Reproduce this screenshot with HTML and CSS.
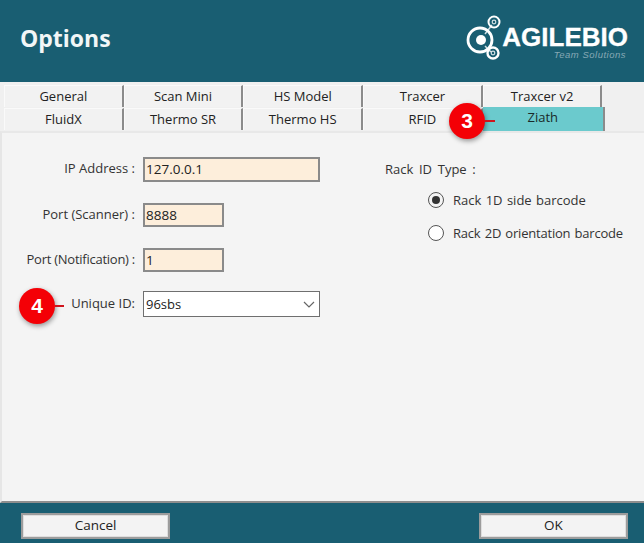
FILE: index.html
```html
<!DOCTYPE html>
<html lang="en">
<head>
<meta charset="utf-8">
<title>Options</title>
<link rel="stylesheet" href="styles.css">
</head>
<body>
<div class="app">
  <header class="header">
    <h1 class="title">Options</h1>
    <div class="logo">
      <svg class="logo-mark" width="36" height="47" viewBox="0 0 36 47" aria-hidden="true">
        <g fill="none" stroke="#fff">
          <path d="M19 19 L26 10 M19 31 L25 37" stroke-width="1.500" opacity=".8"/>
          <circle cx="14" cy="25" r="12" stroke-width="2.800"/>
          <circle cx="28" cy="7" r="5.500" stroke-width="2"/>
          <circle cx="28" cy="7" r="1.800" stroke-width="1.200" opacity=".8"/>
          <circle cx="27" cy="38" r="5.500" stroke-width="2.400"/>
          <circle cx="27" cy="38" r="1.800" stroke-width="1.200" opacity=".8"/>
        </g>
        <circle cx="15" cy="25" r="5" fill="#fff"/>
      </svg>
      <div class="logo-text">
        <div class="logo-name">AGILEBIO</div>
        <div class="logo-sub">Team Solutions</div>
      </div>
    </div>
  </header>

  <main class="body">
    <div class="tabs">
      <div class="tab-row">
        <div class="tab">General</div>
        <div class="tab">Scan Mini</div>
        <div class="tab">HS Model</div>
        <div class="tab">Traxcer</div>
        <div class="tab">Traxcer v2</div>
      </div>
      <div class="tab-row">
        <div class="tab">FluidX</div>
        <div class="tab">Thermo SR</div>
        <div class="tab">Thermo HS</div>
        <div class="tab">RFID</div>
        <div class="tab tab-active">Ziath</div>
      </div>
    </div>

    <section class="panel">
      <div class="form">
        <label class="label">IP Address :</label>
        <div class="input input-wide">127.0.0.1</div>
        <label class="label">Port (Scanner) :</label>
        <div class="input input-narrow">8888</div>
        <label class="label label-tight">Port (Notification) :</label>
        <div class="input input-narrow">1</div>
        <label class="label label-uid">Unique ID:</label>
        <div class="select">
          <span>96sbs</span>
          <svg width="12" height="7" viewBox="0 0 12 7" aria-hidden="true"><path d="M1 1 L6 6 L11 1" fill="none" stroke="#666" stroke-width="1.200"/></svg>
        </div>
      </div>
      <div class="rack">
        <div class="rack-title">Rack ID Type :</div>
        <div class="radio-list">
          <div class="radio-item"><span class="radio radio-on"></span><span class="radio-text">Rack 1D side barcode</span></div>
          <div class="radio-item"><span class="radio"></span><span class="radio-text radio-text-tight">Rack 2D orientation barcode</span></div>
        </div>
      </div>
    </section>
  </main>

  <footer class="footer">
    <button class="btn">Cancel</button>
    <button class="btn">OK</button>
  </footer>

  <div class="callout callout-3"><span class="badge">3</span><span class="lead"></span></div>
  <div class="callout callout-4"><span class="badge">4</span><span class="lead"></span></div>
</div>
</body>
</html>
```
FILE: styles.css
```css
* { box-sizing: border-box; }
html, body { margin: 0; padding: 0; }
body { font-family: "Open Sans", "Noto Sans", sans-serif; color: #222; background: #fff; }
.app { position: relative; width: 644px; height: 543px; display: flex; flex-direction: column; overflow: hidden; }

.header { height: 82px; background: #195e72; display: flex; align-items: flex-start; justify-content: space-between; padding: 0 16px 0 20px; flex: none; }
.title { margin: 22px 0 0; font: 700 23px/32px "Open Sans", sans-serif; color: #f2f6f7; }
.logo { display: flex; gap: 0; margin: 15px 0 0 0; color: #fff; }
.logo-mark { flex: none; }
.logo-text { display: flex; flex-direction: column; align-items: flex-end; margin-top: 10px; }
.logo-name { font: 700 26px/25px "Liberation Sans", sans-serif; -webkit-text-stroke: .3px #fff; }
.logo-sub { font: italic 400 9.500px/10px "Liberation Sans", sans-serif; color: #86a9b5; letter-spacing: .5px; margin-right: 2px; }

.body { flex: 1; background: #f0f0f0; display: flex; flex-direction: column; padding: 3px 0 0; min-height: 0; }
.tabs { display: flex; flex-direction: column; gap: 1px; padding-left: 4px; flex: none; }
.tab-row { display: flex; height: 22px; }
.tab { width: 119.700px; height: 22px; background: #f2f2f2; border-right: 2px solid #8b8b8b; border-top: 1px solid #fafafa; border-left: 1px solid #fafafa; font-size: 13px; line-height: 21px; text-align: center; color: #222; }
.tab-row + .tab-row .tab { line-height: 20px; }
.tab-row + .tab-row .tab-active { width: 122px; height: 24px; margin-top: -1px; background: #6bcacd; border-top: 0; border-left: 0; color: #1a2a2a; line-height: 20px; }

.panel { flex: 1; margin: 1px 0 0; display: flex; background: #f4f4f4; border-left: 2px solid #e6e6e6; border-top: 2px solid #e8e8e8; border-bottom: 2px solid #8e8e8e; min-height: 0; }
.form { width: 383px; display: grid; grid-template-columns: 133px auto; grid-template-rows: 46px 45px 43px 26px; justify-content: start; justify-items: start; align-items: start; padding-top: 24px; align-content: start; column-gap: 8px; }
.label { justify-self: end; font-size: 13px; line-height: 22px; color: #333; white-space: nowrap; }
.label-tight { letter-spacing: -.25px; }
.label-uid { line-height: 24px; }
.input { height: 24px; background: #fdeedb; border: 2px solid #8a8a8a; font-size: 13.500px; line-height: 20px; padding-left: 1px; color: #222; }
.input-wide { width: 177px; height: 25px; line-height: 21px; }
.input-narrow { width: 81px; }
.select { width: 177px; height: 26px; background: #fff; border: 1px solid #6f6f6f; font-size: 13px; display: flex; align-items: center; justify-content: space-between; padding: 0 4px 0 2px; }

.rack { padding-top: 26px; font-size: 13px; color: #333; }
.rack-title { line-height: 20px; word-spacing: 2.300px; }
.radio-list { margin: 11px 0 0 43px; display: flex; flex-direction: column; gap: 13px; }
.radio-item { display: flex; align-items: center; gap: 9px; height: 20px; white-space: nowrap; }
.radio-text { word-spacing: 1px; }
.radio-text-tight { letter-spacing: -.2px; }
.radio { width: 16px; height: 16px; border-radius: 50%; border: 1.500px solid #555; background: #fff; display: flex; align-items: center; justify-content: center; }
.radio-on { background: #f4f4f4; }
.radio-on::after { content: ""; width: 8px; height: 8px; border-radius: 50%; background: #333; }

.footer { height: 40px; background: #195e72; display: flex; justify-content: space-between; align-items: flex-start; padding: 10px 16px 0 21px; flex: none; }
.btn { width: 149px; height: 26px; background: #f3f3f3; border: 2px solid #9c9c9c; box-shadow: inset 0 0 0 1px #dedede; font: 400 13.500px/20px "Open Sans", sans-serif; color: #222; padding: 0 0 2px; }

.callout { position: absolute; display: flex; align-items: center; }
.badge { width: 36px; height: 36px; border-radius: 50%; background: #f40006; color: #fff; font: 700 21px/36px "Liberation Sans", sans-serif; text-align: center; box-shadow: 1px 2px 5px rgba(0,0,0,.4); flex: none; }
.lead { display: block; height: 1.500px; background: #d0141c; }
.callout-3 { left: 449px; top: 103px; }
.callout-3 .lead { width: 10px; }
.callout-4 { left: 19px; top: 288px; }
.callout-4 .lead { width: 9px; }
```
